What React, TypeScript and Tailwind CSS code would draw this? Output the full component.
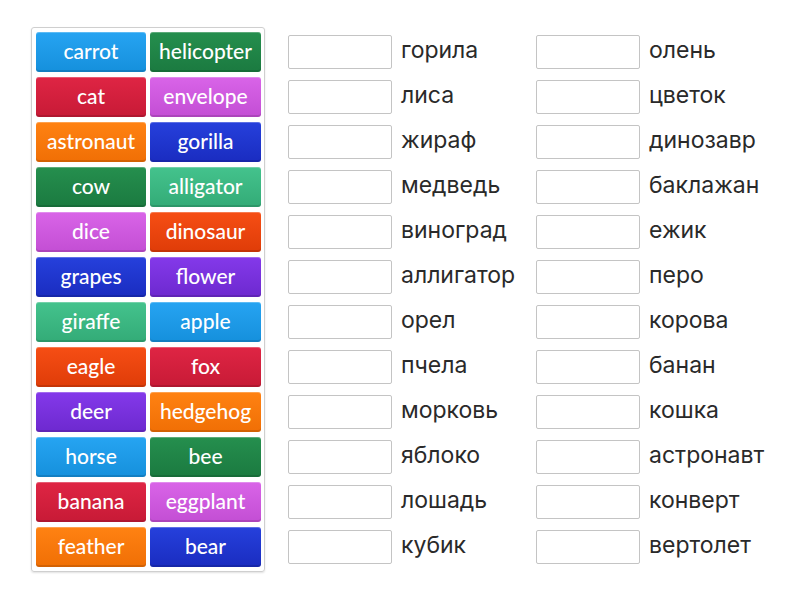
import React from "react";

type Tone = "blue" | "green" | "red" | "pink" | "orange" | "navy" | "teal" | "flame" | "purple";

const toneClass: Record<Tone, string> = {
  blue: "bg-gradient-to-b from-[#26a4f2] to-[#1590dc]",
  green: "bg-gradient-to-b from-[#258f4e] to-[#1b7a40]",
  red: "bg-gradient-to-b from-[#df2544] to-[#c71a36]",
  pink: "bg-gradient-to-b from-[#d964e8] to-[#c34ed4]",
  orange: "bg-gradient-to-b from-[#ff8212] to-[#f06f05]",
  navy: "bg-gradient-to-b from-[#2640dc] to-[#1a2cc0]",
  teal: "bg-gradient-to-b from-[#44c38d] to-[#33ab77]",
  flame: "bg-gradient-to-b from-[#f64e14] to-[#df3c08]",
  purple: "bg-gradient-to-b from-[#8439ea] to-[#6d29cf]",
};

const tiles: [string, Tone][] = [
  ["carrot", "blue"], ["helicopter", "green"],
  ["cat", "red"], ["envelope", "pink"],
  ["astronaut", "orange"], ["gorilla", "navy"],
  ["cow", "green"], ["alligator", "teal"],
  ["dice", "pink"], ["dinosaur", "flame"],
  ["grapes", "navy"], ["flower", "purple"],
  ["giraffe", "teal"], ["apple", "blue"],
  ["eagle", "flame"], ["fox", "red"],
  ["deer", "purple"], ["hedgehog", "orange"],
  ["horse", "blue"], ["bee", "green"],
  ["banana", "red"], ["eggplant", "pink"],
  ["feather", "orange"], ["bear", "navy"],
];

const left = ["горила", "лиса", "жираф", "медведь", "виноград", "аллигатор", "орел", "пчела", "морковь", "яблоко", "лошадь", "кубик"];
const right = ["олень", "цветок", "динозавр", "баклажан", "ежик", "перо", "корова", "банан", "кошка", "астронавт", "конверт", "вертолет"];

const Slot = ({ word }: { word: string }) => (
  <div className="flex items-center h-[34px]">
    <div className="w-[104px] h-[34px] border border-[#c4c4c4] rounded-[2px] bg-white" />
    <span className="ml-[9px] mb-[4px] text-[23px] leading-[28px] text-[#2a2a2a] font-['Inter',sans-serif]">{word}</span>
  </div>
);

export default function App() {
  return (
    <div className="min-h-screen bg-white flex items-start pl-[31px] pt-[27px]">
      <div className="border border-[#cfcfcf] rounded-[3px] shadow-[0_1px_2px_rgba(0,0,0,0.12)] p-[4px] pr-[3px] grid grid-cols-[110px_111px] gap-x-[4px] gap-y-[5px]">
        {tiles.map(([word, tone]) => (
          <div
            key={word}
            className={`${toneClass[tone]} h-[40px] pb-[3px] rounded-[3px] flex items-center justify-center text-white text-[21px] font-medium font-['Lato',sans-serif] shadow-[inset_0_1px_0_rgba(255,255,255,0.25),inset_0_-2px_0_rgba(0,0,0,0.12)]`}
          >
            {word}
          </div>
        ))}
      </div>

      <div className="ml-[23px] mt-[8px] grid grid-cols-[248px_auto] gap-y-[11px]">
        {left.map((w, i) => (
          <React.Fragment key={w}>
            <Slot word={w} />
            <Slot word={right[i]} />
          </React.Fragment>
        ))}
      </div>
    </div>
  );
}
